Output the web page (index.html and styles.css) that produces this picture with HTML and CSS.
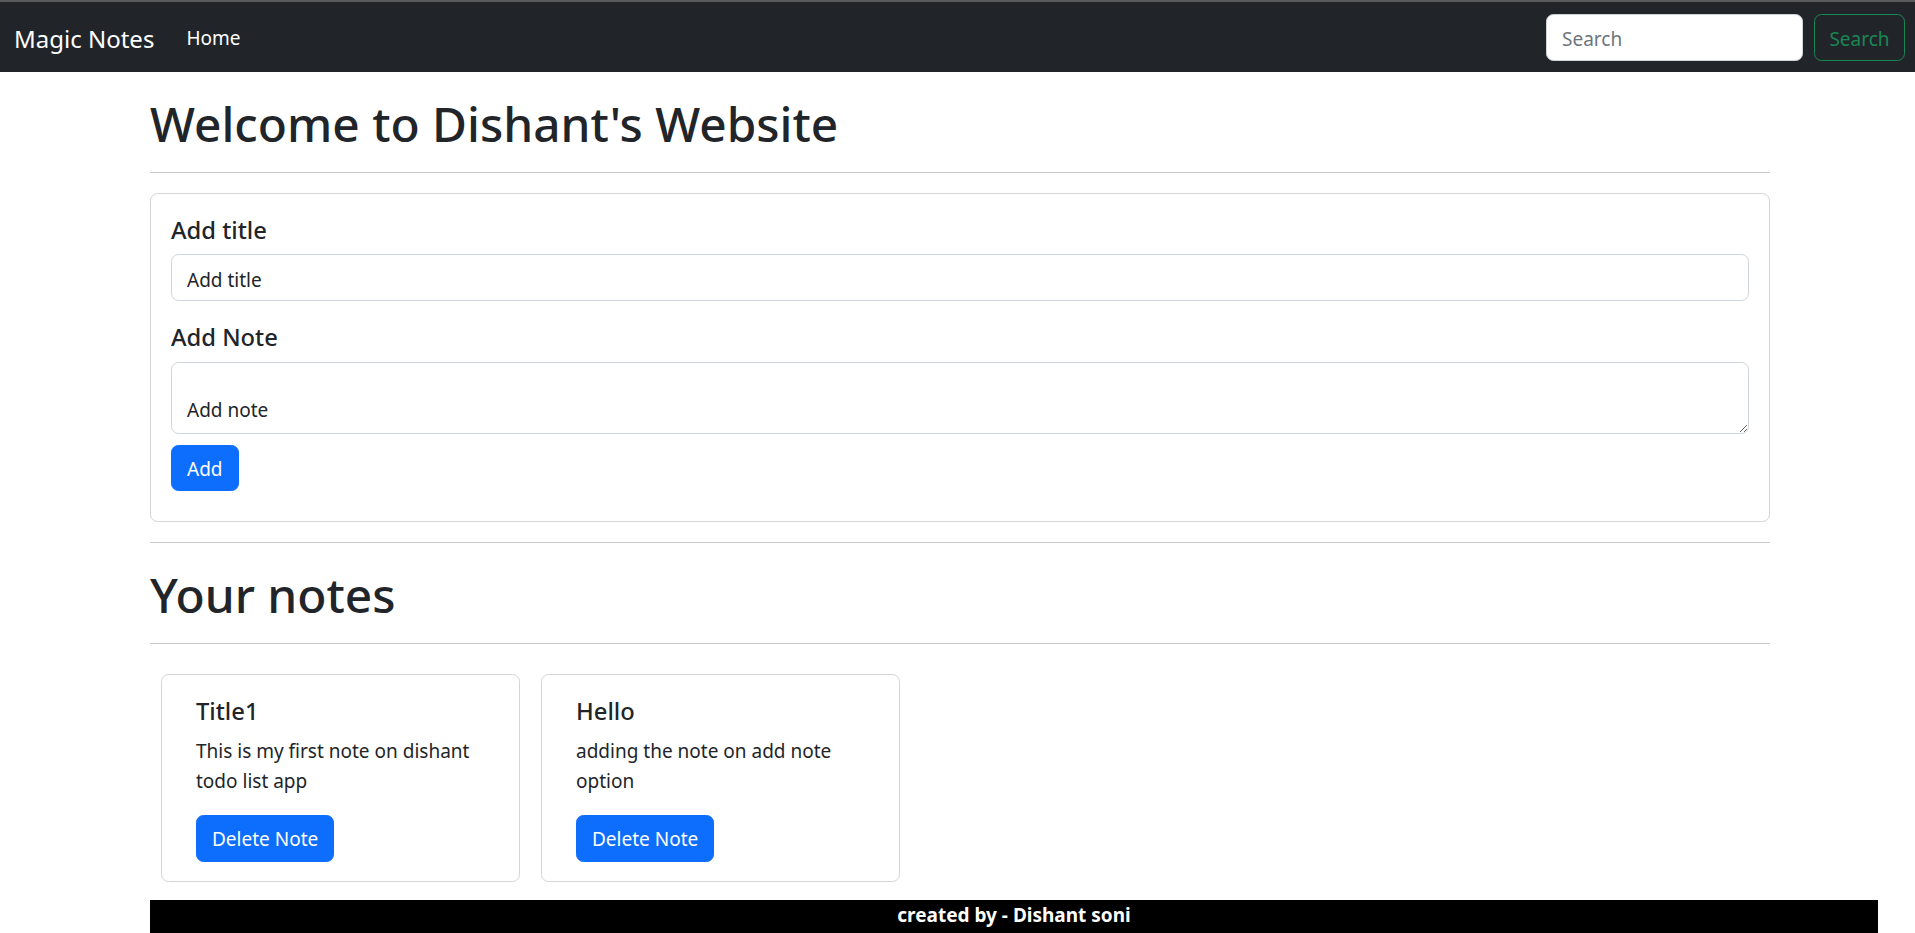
FILE: index.html
```html
<!DOCTYPE html>
<html lang="en">
<head>
<meta charset="utf-8">
<title>Magic Notes</title>
<link rel="stylesheet" href="styles.css">
</head>
<body>
<nav class="navbar">
  <a class="brand" href="#">Magic Notes</a>
  <a class="nav-link" href="#">Home</a>
  <form class="search-form">
    <input class="search-input" type="search" placeholder="Search">
    <button class="btn-outline" type="button">Search</button>
  </form>
</nav>

<main class="container">
  <h1 class="heading">Welcome to Dishant's Website</h1>
  <hr class="rule rule-after-title">
  <section class="card form-card">
    <label class="label" for="addTitle">Add title</label>
    <input class="field" id="addTitle" type="text" value="Add title">
    <label class="label label-note" for="addTxt">Add Note</label>
    <textarea class="field area" id="addTxt">Add note</textarea>
    <button class="btn btn-add" type="button">Add</button>
  </section>
  <hr class="rule rule-before-notes">
  <h1 class="heading">Your notes</h1>
  <hr class="rule">
  <div class="notes">
    <div class="card note-card">
      <h5 class="note-title">Title1</h5>
      <p class="note-text">This is my first note on dishant todo list app</p>
      <button class="btn" type="button">Delete Note</button>
    </div>
    <div class="card note-card">
      <h5 class="note-title">Hello</h5>
      <p class="note-text">adding the note on add note option</p>
      <button class="btn" type="button">Delete Note</button>
    </div>
  </div>
</main>

<footer class="footer">created by - Dishant soni</footer>
</body>
</html>
```

FILE: styles.css
```css
html, body {
  margin: 0;
  padding: 0;
  overflow: hidden;
  background: #fff;
}
body {
  font-family: "Noto Sans", "Open Sans", sans-serif;
  font-size: 19px;
  line-height: 30px;
  color: #212529;
}
*, *::before, *::after { box-sizing: border-box; }

/* navbar */
.navbar {
  height: 72px;
  border-top: 2px solid #5a5b5c;
  background: #212529;
  display: flex;
  align-items: center;
  padding: 0 10px 0 14px;
}
.brand {
  color: #fff;
  text-decoration: none;
  font-size: 24px;
  line-height: 37px;
  margin-right: 22px;
  padding-top: 2px;
}
.nav-link {
  color: #fff;
  text-decoration: none;
  font-size: 19px;
  line-height: 30px;
  padding: 1px 10px 0;
}
.search-form {
  margin-left: auto;
  display: flex;
  align-items: center;
}
.search-input {
  width: 257px;
  height: 47px;
  margin-right: 11px;
  border: 1px solid #ced4da;
  border-radius: 7.5px;
  padding: 4px 15px 0;
  font-family: inherit;
  font-size: 19px;
  color: #212529;
  background: #fff;
  outline: none;
}
.search-input::placeholder { color: #6c757d; }
.btn-outline {
  width: 91px;
  height: 47px;
  border: 1px solid #198754;
  border-radius: 7.5px;
  background: transparent;
  color: #198754;
  font-family: inherit;
  font-size: 19px;
  padding: 3px 0 0;
}

/* main */
.container {
  width: 1620px;
  margin-left: 150px;
  display: flex;
  flex-direction: column;
}
.heading {
  margin: 21.6px 0 18.4px;
  font-size: 47.8px;
  line-height: 60px;
  font-weight: 500;
  color: #212529;
}
.rule {
  margin: 0;
  border: 0;
  border-top: 1px solid #c8c9ca;
  height: 0;
}
.rule-after-title { margin-bottom: 20px; }
.rule-before-notes { margin-top: 20px; }

.card {
  border: 1px solid #d3d4d5;
  border-radius: 7.5px;
  background: #fff;
}
.form-card {
  display: flex;
  flex-direction: column;
  align-items: flex-start;
  padding: 21px 20px 30px;
}
.label {
  font-size: 23.75px;
  line-height: 30px;
  font-weight: 500;
  margin-bottom: 9px;
}
.label-note {
  margin-top: 21px;
  margin-bottom: 10px;
}
.field {
  width: 100%;
  height: 47px;
  border: 1px solid #ced4da;
  border-radius: 7.5px;
  padding: 5px 15px 0;
  font-family: inherit;
  font-size: 19px;
  line-height: 30px;
  color: #212529;
  background: #fff;
  outline: none;
}
.area {
  height: 72px;
  display: block;
  padding: 32px 15px 0;
  overflow: hidden;
  resize: vertical;
}
.btn {
  height: 47px;
  border: 1px solid #0d6efd;
  border-radius: 7.5px;
  background: #0d6efd;
  color: #fff;
  font-family: inherit;
  font-size: 19px;
  line-height: 30px;
  padding: 2px 15px 0;
}
.btn-add {
  margin-top: 11px;
  height: 46px;
}

.notes {
  display: flex;
  gap: 21px;
  margin: 30px 0 0 11px;
}
.note-card {
  width: 359px;
  padding: 21px 34px 19px;
  display: flex;
  flex-direction: column;
  align-items: flex-start;
}
.note-title {
  margin: 0 0 10px;
  font-size: 23.75px;
  line-height: 30px;
  font-weight: 500;
}
.note-text {
  margin: 0 0 19px;
}

/* footer */
.footer {
  margin: 18px 0 0 150px;
  width: 1728px;
  height: 33px;
  background: #000;
  color: #fff;
  font-weight: 700;
  text-align: center;
  line-height: 30px;
}
```
